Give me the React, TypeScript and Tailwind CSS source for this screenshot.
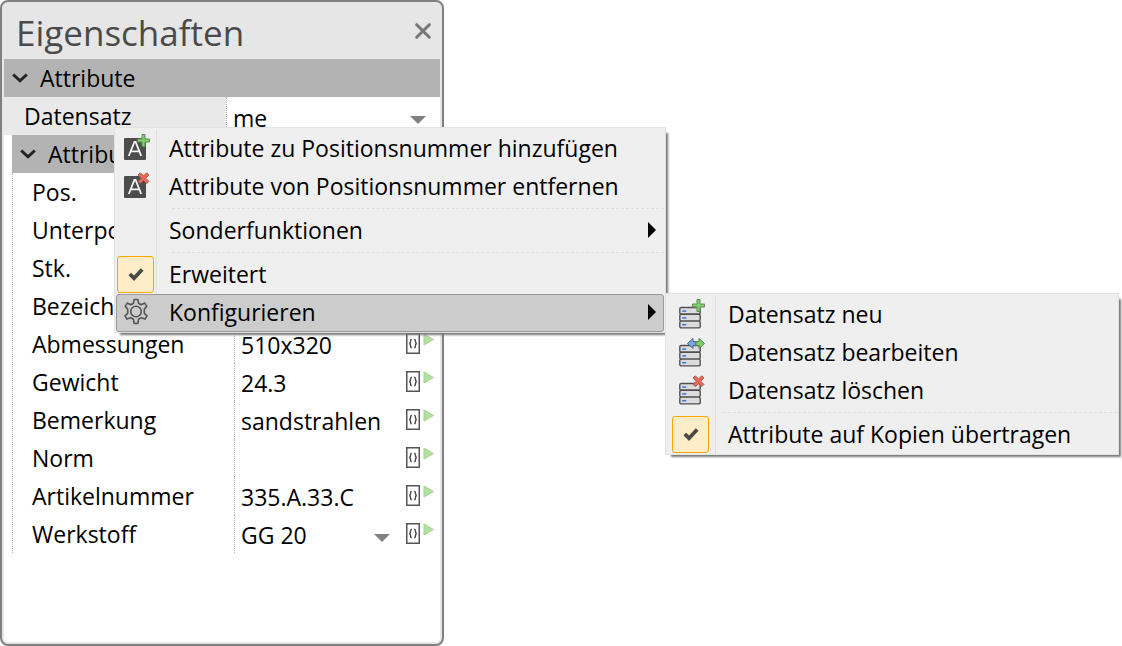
import type { ReactNode } from "react";

function Chevron() {
  return (
    <svg viewBox="0 0 16 10" className="h-[10px] w-4 shrink-0" aria-hidden="true">
      <path d="M1.200 1.500 8 7.800l6.800-6.300" fill="none" stroke="#222" strokeWidth="3" />
    </svg>
  );
}

function DropArrow() {
  return (
    <svg viewBox="0 0 16 8" className="h-2 w-4" aria-hidden="true">
      <path d="M0 0h16L8 8z" fill="#808080" />
    </svg>
  );
}

function FieldIcons() {
  return (
    <svg viewBox="0 0 30 24" className="h-6 w-[30px]" aria-hidden="true">
      <rect x="1.750" y="2.750" width="12.500" height="19.500" fill="#fff" stroke="#555" strokeWidth="1.500" />
      <path
        d="M6.800 8.200C5.600 8.200 5.600 9 5.600 10s0 2.200-1.300 2.500c1.300.3 1.300 1.500 1.300 2.500s0 1.800 1.200 1.800M9.200 8.200c1.200 0 1.200.8 1.200 1.800s0 2.200 1.300 2.500c-1.300.3-1.300 1.500-1.300 2.500s0 1.800-1.200 1.800"
        fill="none"
        stroke="#444"
        strokeWidth="1.400"
      />
      <path d="M19 3v11L28.500 8.500z" fill="#b5dea2" stroke="#a3d48e" strokeWidth="1" />
    </svg>
  );
}

function Plus() {
  return (
    <path
      d="M18 .5h3v4.500h4.500v3h-4.500v4.500h-3V8h-4.500V5h4.500z"
      fill="#7fd069"
      stroke="#5f8f53"
      strokeWidth="1"
    />
  );
}

function Cross() {
  return (
    <path
      d="m16.300.8 3.200 3.200 3.200-3.200 2.200 2.200-3.200 3.200 3.200 3.200-2.200 2.200-3.200-3.200-3.200 3.200-2.200-2.200 3.200-3.200-3.200-3.200z"
      fill="#e96a58"
      stroke="#b0564a"
      strokeWidth="1"
    />
  );
}

function AttributeIcon({ children }: { children: ReactNode }) {
  return (
    <svg viewBox="-3 0 29 28" className="h-7 w-[29px]" aria-hidden="true">
      <rect x="0" y="4" width="22" height="22" rx="1" fill="#4c4c4c" />
      <path d="M4.800 22 10.400 8h1.200L17.200 22M7 17.300h8" fill="none" stroke="#f4f4f4" strokeWidth="1.800" />
      {children}
    </svg>
  );
}

function RecordIcon({ children }: { children: ReactNode }) {
  return (
    <svg viewBox="-3 0 29 30" className="h-[30px] w-[29px]" aria-hidden="true">
      {[8.5, 15.3, 22.1].map((y) => (
        <g key={y}>
          <rect x=".8" y={y} width="20.400" height="6.800" rx="1.500" fill="#dcdcdc" stroke="#505050" strokeWidth="1.400" />
          <path d={`M3.200 ${y + 3.6}h4`} stroke="#3375d6" strokeWidth="1.500" />
        </g>
      ))}
      {children}
    </svg>
  );
}

function SwapArrows() {
  return (
    <g strokeWidth="1">
      <path d="M17 4.500h-3V1.500L8.500 6.500l5.500 5V8.500h3z" fill="#79a5e2" stroke="#42658f" />
      <path d="M17 4.500h3V1.500l5.500 5-5.500 5V8.500h-3z" fill="#7fd069" stroke="#56804b" />
    </g>
  );
}

function Gear() {
  return (
    <svg viewBox="0 0 28 28" className="h-7 w-7" aria-hidden="true">
      <path
        d="M12.200 1.500h3.600l.7 3.700 2.700 1.500 3.600-1.600 2 3.300-2.500 2.700v4.200l2.700 2.500-2 3.300-3.700-1.300-2.800 1.500-.7 4.200h-3.600l-.7-4.200-2.800-1.500L5 21.100l-2-3.300 2.700-2.500v-4.200L3.200 8.400l2-3.300 3.600 1.600 2.700-1.500z"
        fill="none"
        stroke="#555"
        strokeWidth="1.600"
        strokeLinejoin="round"
      />
      <circle cx="14" cy="13.500" r="5.300" fill="none" stroke="#555" strokeWidth="1.600" />
    </svg>
  );
}

function CheckBox() {
  return (
    <span className="flex h-[37px] w-[37px] items-center justify-center rounded-[3px] border border-[#ffa500] bg-[#ffedc8]">
      <svg viewBox="0 0 16 14" className="h-[14px] w-4" aria-hidden="true">
        <path d="m1.800 7 4.200 4.200L14.200 2.500" fill="none" stroke="#4a4a4a" strokeWidth="3.800" />
      </svg>
    </span>
  );
}

type ItemProps = {
  icon?: ReactNode;
  label: string;
  submenu?: boolean;
  active?: boolean;
  checked?: boolean;
  wide?: boolean;
};

function MenuItem({ icon, label, submenu, active, checked, wide }: ItemProps) {
  return (
    <button
      type="button"
      role={checked ? "menuitemcheckbox" : "menuitem"}
      aria-checked={checked}
      aria-haspopup={submenu ? "menu" : undefined}
      className={
        active
          ? "flex h-[38px] w-full items-center rounded-[3px] border border-[#999] bg-[#cccccc] pb-[2px] text-left"
          : "flex h-[38px] w-full items-center border border-transparent pb-[2px] text-left"
      }
    >
      <span className={`flex shrink-0 items-center justify-center ${wide ? "w-[45px]" : "w-[37px]"}`}>
        {checked ? <CheckBox /> : icon}
      </span>
      <span className="grow pl-[15px] whitespace-nowrap">{label}</span>
      {submenu && (
        <svg viewBox="0 0 8 16" className="mr-[7px] h-4 w-2" aria-hidden="true">
          <path d="M0 0v16l8-8z" fill="#000" />
        </svg>
      )}
    </button>
  );
}

function Separator() {
  return (
    <div role="separator" className="h-[6px] pt-[2px] pl-[56px]">
      <div className="border-t border-dashed border-[#dedede]" />
    </div>
  );
}

type MenuProps = { label: string; className: string; gutter: string; children: ReactNode };

function Menu({ label, className, gutter, children }: MenuProps) {
  return (
    <div
      role="menu"
      aria-label={label}
      className={`absolute border border-[#e2e2e2] bg-[#efefef] pt-[2px] pr-px pl-px shadow-[4px_4px_2px_-2px_#777] ${className}`}
    >
      <div className={`bg-[linear-gradient(#e0e0e0,#e0e0e0)] bg-[length:1px_100%] bg-no-repeat ${gutter}`}>
        {children}
      </div>
    </div>
  );
}

const fields = [
  { id: "pos", label: "Pos.", value: "" },
  { id: "unterpos", label: "Unterpos.", value: "" },
  { id: "stk", label: "Stk.", value: "" },
  { id: "bezeichnung", label: "Bezeichnung", value: "" },
  { id: "abmessungen", label: "Abmessungen", value: "510x320" },
  { id: "gewicht", label: "Gewicht", value: "24.3" },
  { id: "bemerkung", label: "Bemerkung", value: "sandstrahlen" },
  { id: "norm", label: "Norm", value: "" },
  { id: "artikelnummer", label: "Artikelnummer", value: "335.A.33.C" },
  { id: "werkstoff", label: "Werkstoff", value: "GG 20", select: true },
];

export default function App() {
  return (
    <div className="relative min-h-screen bg-white font-['Open_Sans','Noto_Sans',sans-serif] text-[23px] leading-[38px] text-black">
      <section className="flex min-h-screen w-[444px] flex-col rounded-lg border-2 border-[#808080] bg-[#e6e6e6] px-[2px] pb-[2px]">
        <header className="flex h-[57px] items-center justify-between pr-[9px] pl-3 text-[#4a4a4a]">
          <h1 className="pt-[4px] text-[35px] leading-[48px]">Eigenschaften</h1>
          <button type="button" aria-label="Schließen">
            <svg viewBox="0 0 16 16" className="h-4 w-4" aria-hidden="true">
              <path d="m1.700 1.700 12.600 12.600m0-12.600-12.600 12.600" stroke="#777" strokeWidth="3" strokeLinecap="round" />
            </svg>
          </button>
        </header>
        <div className="grow rounded-b-sm bg-white">
          <button type="button" className="flex h-[38px] w-full items-center gap-3 bg-[#b3b3b3] pl-2">
            <Chevron />
            Attribute
          </button>
          <div className="flex h-[38px]">
            <label htmlFor="datensatz" className="w-[222px] bg-[#e9e9e9] pl-5">
              Datensatz
            </label>
            <div className="grid grow items-center border-l border-dotted border-[#b8b8b8] pt-[2px] pr-[14px] pl-[6px]">
              <select id="datensatz" className="col-start-1 row-start-1 w-full appearance-none bg-transparent">
                <option>me</option>
              </select>
              <span className="pointer-events-none col-start-1 row-start-1 justify-self-end pt-1">
                <DropArrow />
              </span>
            </div>
          </div>
          <div className="pl-2">
            <button type="button" className="flex h-[38px] w-full items-center gap-3 bg-[#b3b3b3] pl-2">
              <Chevron />
              Attribute
            </button>
            <div className="border-l border-dotted border-[#b8b8b8]">
              {fields.map((field) => (
                <div key={field.id} className="flex h-[38px]">
                  <label htmlFor={field.id} className="w-[221px] shrink-0 pl-[19px]">
                    {field.label}
                  </label>
                  <div className="flex min-w-0 grow items-center border-l border-dotted border-[#b8b8b8] pr-[5px] pl-[6px]">
                    {field.select ? (
                      <div className="grid min-w-0 grow items-center pt-[2px]">
                        <select id={field.id} className="col-start-1 row-start-1 w-full appearance-none bg-transparent">
                          <option>{field.value}</option>
                        </select>
                        <span className="pointer-events-none col-start-1 row-start-1 mr-[15px] justify-self-end pt-[6px]">
                          <DropArrow />
                        </span>
                      </div>
                    ) : (
                      <input id={field.id} defaultValue={field.value} className="min-w-0 grow bg-transparent pt-[2px]" />
                    )}
                    <span className="-mt-[3px]">
                      <FieldIcons />
                    </span>
                  </div>
                </div>
              ))}
            </div>
          </div>
        </div>
      </section>

      <Menu label="Attribute" className="top-[127px] left-[114px] w-[552px]" gutter="bg-[position:40px_0]">
        <MenuItem icon={<AttributeIcon><Plus /></AttributeIcon>} label="Attribute zu Positionsnummer hinzufügen" />
        <MenuItem icon={<AttributeIcon><Cross /></AttributeIcon>} label="Attribute von Positionsnummer entfernen" />
        <Separator />
        <MenuItem label="Sonderfunktionen" submenu />
        <Separator />
        <MenuItem label="Erweitert" checked />
        <MenuItem icon={<Gear />} label="Konfigurieren" submenu active />
      </Menu>

      <Menu label="Konfigurieren" className="top-[293px] left-[665px] w-[454px]" gutter="bg-[position:48px_0]">
        <MenuItem wide icon={<RecordIcon><Plus /></RecordIcon>} label="Datensatz neu" />
        <MenuItem wide icon={<RecordIcon><SwapArrows /></RecordIcon>} label="Datensatz bearbeiten" />
        <MenuItem wide icon={<RecordIcon><Cross /></RecordIcon>} label="Datensatz löschen" />
        <Separator />
        <MenuItem wide label="Attribute auf Kopien übertragen" checked />
      </Menu>
    </div>
  );
}
